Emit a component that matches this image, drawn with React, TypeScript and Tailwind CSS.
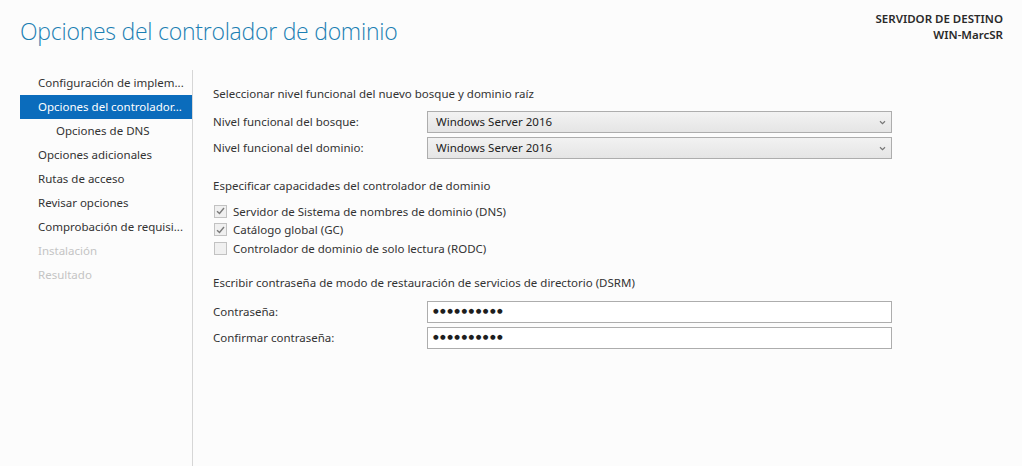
import React from "react";

const navItems: { label: string; state: "normal" | "selected" | "sub" | "disabled" }[] = [
  { label: "Configuración de implem...", state: "normal" },
  { label: "Opciones del controlador...", state: "selected" },
  { label: "Opciones de DNS", state: "sub" },
  { label: "Opciones adicionales", state: "normal" },
  { label: "Rutas de acceso", state: "normal" },
  { label: "Revisar opciones", state: "normal" },
  { label: "Comprobación de requisi...", state: "normal" },
  { label: "Instalación", state: "disabled" },
  { label: "Resultado", state: "disabled" },
];

function NavItem({ label, state }: { label: string; state: string }) {
  if (state === "selected") {
    return (
      <div className="h-[24px] flex items-center bg-[#0b6cbc] text-white pl-[18px] whitespace-nowrap overflow-hidden">
        {label}
      </div>
    );
  }
  if (state === "sub") {
    return <div className="h-[24px] flex items-center pl-[36px] text-[#333] whitespace-nowrap">{label}</div>;
  }
  if (state === "disabled") {
    return <div className="h-[24px] flex items-center pl-[18px] text-[#c4c4c4] whitespace-nowrap">{label}</div>;
  }
  return <div className="h-[24px] flex items-center pl-[18px] text-[#333] whitespace-nowrap">{label}</div>;
}

function Chevron() {
  return (
    <svg width="7" height="5" viewBox="0 0 7 5" className="block">
      <path d="M1 1.2 L3.5 3.6 L6 1.2" fill="none" stroke="#777" strokeWidth="1.2" />
    </svg>
  );
}

function SelectRow({ label, value }: { label: string; value: string }) {
  return (
    <div className="flex items-center h-[22px]">
      <div className="w-[214px] text-[#333]">{label}</div>
      <div className="w-[465px] h-[22px] border border-[#adadad] bg-gradient-to-b from-[#f2f2f2] to-[#e5e5e5] flex items-center justify-between pl-[8px] pr-[5px] text-[#222]">
        <span>{value}</span>
        <Chevron />
      </div>
    </div>
  );
}

function CheckRow({ label, checked }: { label: string; checked: boolean }) {
  return (
    <div className="flex items-center h-[18.5px]">
      <div className="w-[13px] h-[13px] border border-[#c2c2c2] bg-[#f0f0f0] flex items-center justify-center mr-[6px] ml-[1px]">
        {checked && (
          <svg width="9" height="8" viewBox="0 0 9 8">
            <path d="M1 4.2 L3.5 6.5 L8 1" fill="none" stroke="#7a7a7a" strokeWidth="1.4" />
          </svg>
        )}
      </div>
      <span className="text-[#333]">{label}</span>
    </div>
  );
}

function PasswordRow({ label }: { label: string }) {
  return (
    <div className="flex items-center h-[22px]">
      <div className="w-[214px] text-[#333]">{label}</div>
      <div className="w-[465px] h-[22px] border border-[#adadad] bg-white flex items-center pl-[5px]">
        <span className="text-[#1e1e1e] text-[6.5px] tracking-[1.45px] leading-none font-['DejaVu_Sans',sans-serif]">
          ●●●●●●●●●●
        </span>
      </div>
    </div>
  );
}

export default function App() {
  return (
    <div className="w-[1022px] h-[466px] bg-[#fcfcfc] overflow-hidden font-['Noto_Sans',sans-serif] text-[11.5px] flex flex-col">
      <div className="flex justify-between h-[70px]">
        <div className="pl-[20px] pt-[14px] text-[23px] font-light text-[#1b7fb3] font-['Open_Sans',sans-serif] tracking-[-0.25px]">
          Opciones del controlador de dominio
        </div>
        <div className="pr-[19px] pt-[11px] text-right text-[11.5px] font-semibold text-[#2a2a2a] leading-[16px]">
          <div>SERVIDOR DE DESTINO</div>
          <div>WIN-MarcSR</div>
        </div>
      </div>
      <div className="flex flex-1">
        <div className="w-[193px] pl-[20px] pt-[1px] border-r border-[#d6d6d6]">
          <div className="w-[172px]">
            {navItems.map((n) => (
              <NavItem key={n.label} label={n.label} state={n.state} />
            ))}
          </div>
        </div>
        <div className="pl-[20px] pt-[16px] flex flex-col">
          <div className="h-[16px] flex items-center text-[#333]">Seleccionar nivel funcional del nuevo bosque y dominio raíz</div>
          <div className="mt-[9px] flex flex-col gap-[4px]">
            <SelectRow label="Nivel funcional del bosque:" value="Windows Server 2016" />
            <SelectRow label="Nivel funcional del dominio:" value="Windows Server 2016" />
          </div>
          <div className="mt-[19px] h-[16px] flex items-center text-[#333]">Especificar capacidades del controlador de dominio</div>
          <div className="mt-[8px] flex flex-col">
            <CheckRow label="Servidor de Sistema de nombres de dominio (DNS)" checked />
            <CheckRow label="Catálogo global (GC)" checked />
            <CheckRow label="Controlador de dominio de solo lectura (RODC)" checked={false} />
          </div>
          <div className="mt-[17px] h-[16px] flex items-center text-[#333]">
            Escribir contraseña de modo de restauración de servicios de directorio (DSRM)
          </div>
          <div className="mt-[10px] flex flex-col gap-[4px]">
            <PasswordRow label="Contraseña:" />
            <PasswordRow label="Confirmar contraseña:" />
          </div>
        </div>
      </div>
    </div>
  );
}
